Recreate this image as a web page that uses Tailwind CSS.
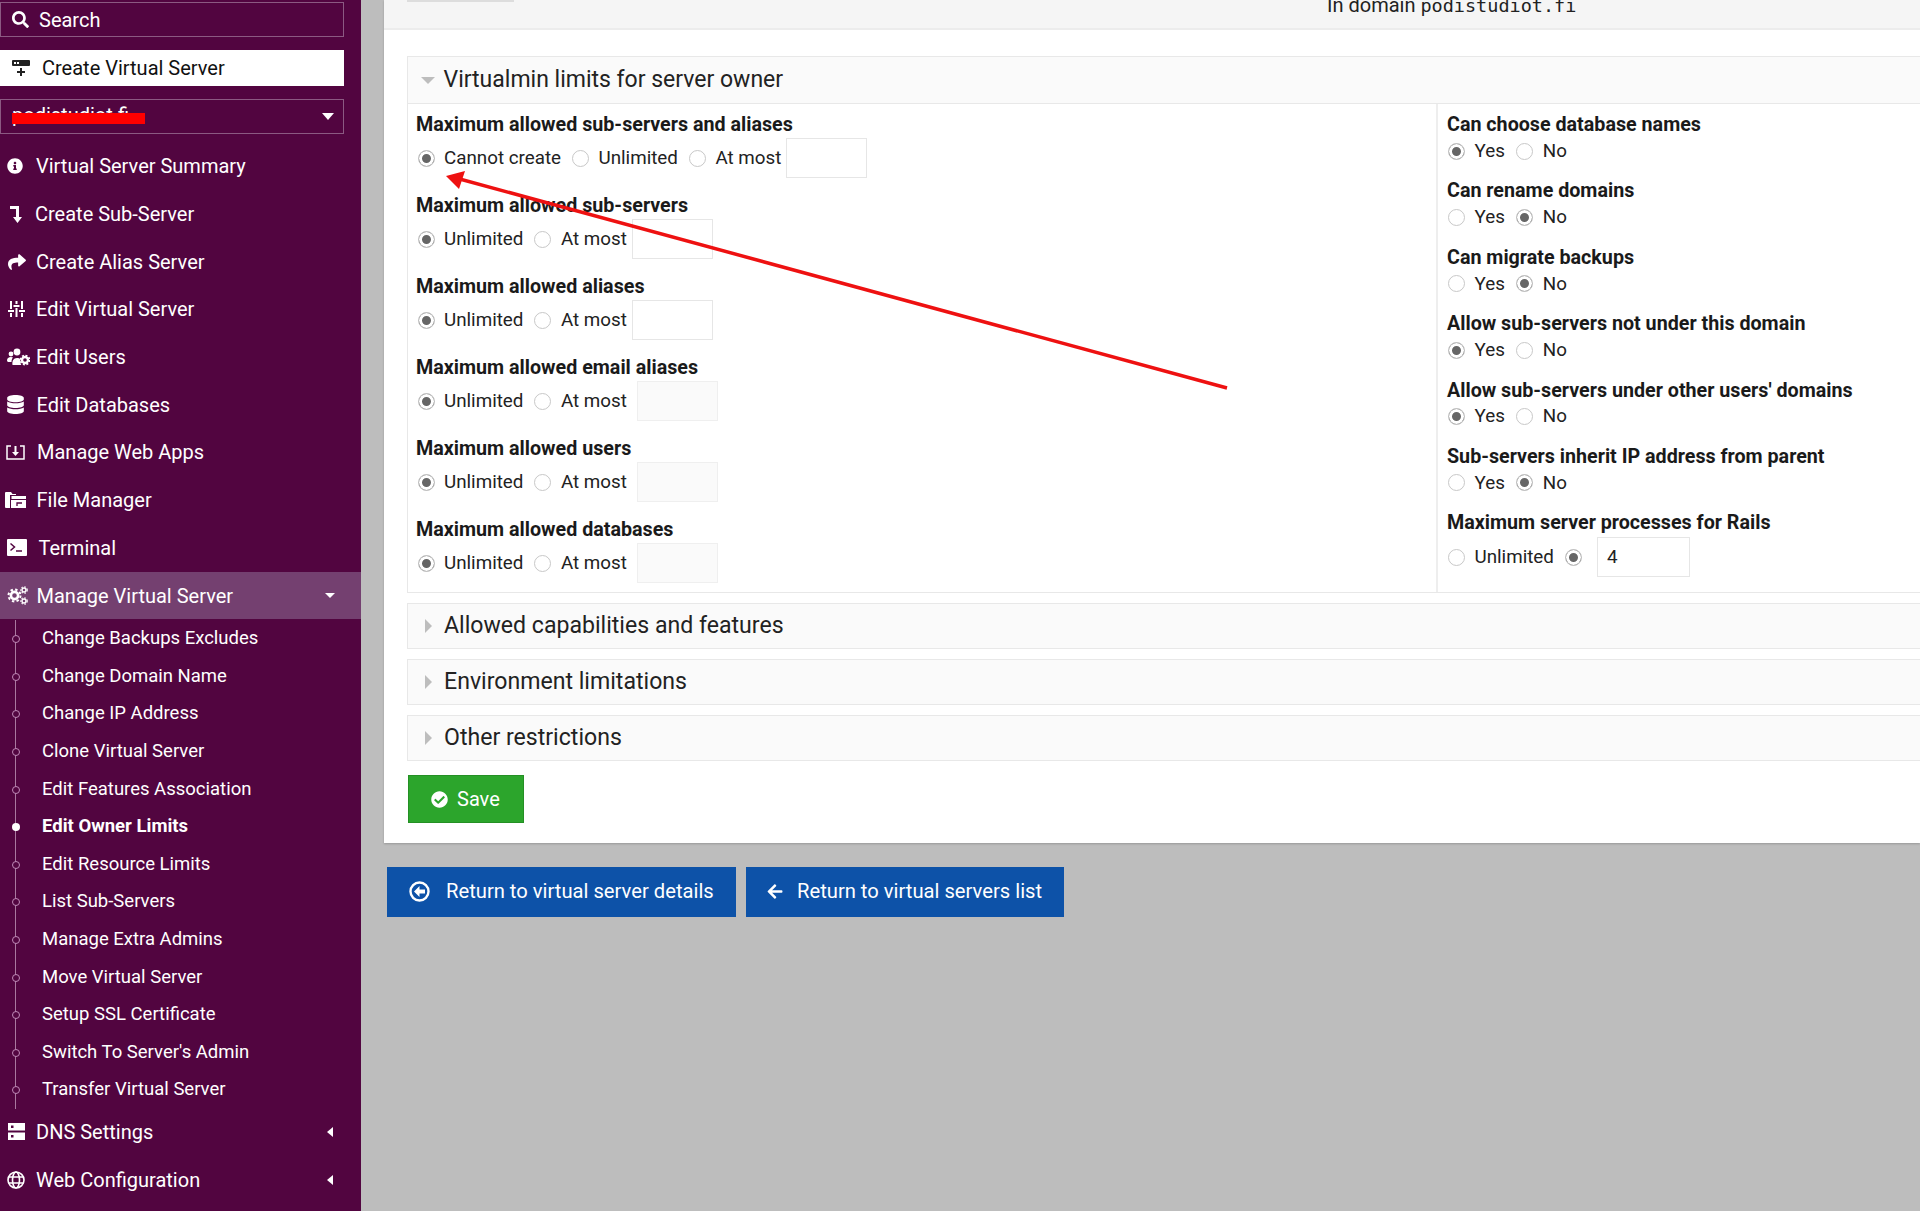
<!DOCTYPE html>
<html lang="en">
<head>
<meta charset="UTF-8">
<title>Edit Owner Limits</title>
<script src="https://cdn.jsdelivr.net/npm/@tailwindcss/browser@4"></script>
</head>
<body class="font-['Roboto',sans-serif] bg-[#bdbdbd]">
<div class="relative flex w-[1920px] h-[1211px] overflow-hidden">

  <!-- Sidebar -->
  <aside class="w-[361px] shrink-0 bg-[#520540] text-white pt-[2px]">
    <div class="w-[344px] h-[35px] border border-[#8b5a82] flex items-center pl-[11px] text-[20px]">
      <svg class="w-[17px] h-[17px] mr-[10px] fill-white" viewBox="0 0 512 512"><path d="M505 442.7L405.3 343c-4.5-4.5-10.6-7-17-7H372c27.6-35.3 44-79.7 44-128C416 93.1 322.9 0 208 0S0 93.1 0 208s93.1 208 208 208c48.3 0 92.7-16.4 128-44v16.3c0 6.4 2.5 12.5 7 17l99.7 99.7c9.4 9.4 24.6 9.4 33.9 0l28.3-28.3c9.4-9.4 9.4-24.6.1-34zM208 336c-70.7 0-128-57.2-128-128 0-70.7 57.2-128 128-128 70.7 0 128 57.2 128 128 0 70.7-57.2 128-128 128z"/></svg>
      Search
    </div>
    <div class="mt-[13px] w-[344px] h-[36px] bg-white text-[#111] flex items-center pl-[12px] text-[20px]">
      <svg class="w-[18px] h-[18px] mr-[12px]" viewBox="0 0 18 18"><rect x="0" y="1" width="18" height="6" rx="1" fill="#222"/><rect x="2" y="3" width="2" height="2" fill="#fff"/><rect x="5" y="3" width="2" height="2" fill="#fff"/><path d="M8 9h2v3h3v2h-3v3H8v-3H5v-2h3z" fill="#222"/></svg>
      Create Virtual Server
    </div>
    <div class="mt-[13px] w-[344px] h-[35px] border border-[#8b5a82] flex items-center justify-between pl-[11px] pr-[9px] text-[20px]">
      <span class="-translate-y-[2px]">podistudiot.fi</span>
      <span class="w-0 h-0 border-x-[6px] border-x-transparent border-t-[7px] border-t-white"></span>
    </div>

    <nav class="mt-[8.5px]" id="menu-top">
      <a class="h-[47.7px] flex items-center text-[20px]"><svg class="w-[16px] h-[16px] ml-[7px] mr-[13px] fill-white" viewBox="0 0 512 512"><path d="M256 8C119.043 8 8 119.083 8 256c0 136.997 111.043 248 248 248s248-111.003 248-248C504 119.083 392.957 8 256 8zm0 110c23.196 0 42 18.804 42 42s-18.804 42-42 42-42-18.804-42-42 18.804-42 42-42zm56 254c0 6.627-5.373 12-12 12h-88c-6.627 0-12-5.373-12-12v-24c0-6.627 5.373-12 12-12h12v-64h-12c-6.627 0-12-5.373-12-12v-24c0-6.627 5.373-12 12-12h64c6.627 0 12 5.373 12 12v100h12c6.627 0 12 5.373 12 12v24z"/></svg>Virtual Server Summary</a>
      <a class="h-[47.7px] flex items-center text-[20px]"><svg class="w-[14px] h-[17px] ml-[9px] mr-[12px] fill-white" viewBox="0 0 14 17"><path d="M1 0h9v11h3l-4.5 6L4 11h3V3H1z"/></svg>Create Sub-Server</a>
      <a class="h-[47.7px] flex items-center text-[20px]"><svg class="w-[18px] h-[18px] ml-[8px] mr-[10px] fill-white" viewBox="0 0 512 512"><path d="M503.691 189.836L327.687 37.851C312.281 24.546 288 35.347 288 56.015v80.053C127.371 137.907 0 170.1 0 322.326c0 61.441 39.581 122.309 83.333 154.132 13.653 9.931 33.111-2.533 28.077-18.631C66.066 312.814 132.917 274.316 288 272.085V360c0 20.7 24.3 31.453 39.687 18.164l176.004-152c11.071-9.562 11.086-26.753 0-36.328z"/></svg>Create Alias Server</a>
      <a class="h-[47.7px] flex items-center text-[20px]"><svg class="w-[17px] h-[16px] ml-[8px] mr-[11px] fill-white" viewBox="0 0 17 16"><path d="M2 0h2v8H2zM2 12h2v4H2zM0 9h6v2H0zM7.5 0h2v3h-2zM7.5 7h2v9h-2zM5.5 4h6v2h-6zM13 0h2v8h-2zM13 12h2v4h-2zM11 9h6v2h-6z"/></svg>Edit Virtual Server</a>
      <a class="h-[47.7px] flex items-center text-[20px]"><svg class="w-[24px] h-[18px] ml-[6px] mr-[6px] fill-white" viewBox="0 0 24 18"><circle cx="5" cy="6" r="2.4"/><circle cx="11" cy="4" r="3.4"/><path d="M1 13c0-3 1.5-4 4-4 .8 0 1.4.2 2 .5C6 10.500 5.500 12 5.500 14H2zM6.500 17c-.6-4 1-7 4.500-7 1.500 0 2.500.4 3.500 1.200-.5 2-.2 4 .8 5.800z"/><circle cx="19" cy="12" r="3" fill="none" stroke="#fff" stroke-width="2.400"/><circle cx="19" cy="12" r="4.600" fill="none" stroke="#fff" stroke-width="1.600" stroke-dasharray="2 1.600"/></svg>Edit Users</a>
      <a class="h-[47.7px] flex items-center text-[20px]"><svg class="w-[17px] h-[19px] ml-[7px] mr-[12.500px] fill-white" viewBox="0 0 448 512"><path d="M448 73.143v45.714C448 159.143 347.667 192 224 192S0 159.143 0 118.857V73.143C0 32.857 100.333 0 224 0s224 32.857 224 73.143zM448 176v102.857C448 319.143 347.667 352 224 352S0 319.143 0 278.857V176c48.125 33.143 136.208 48.572 224 48.572S399.874 209.143 448 176zm0 160v102.857C448 479.143 347.667 512 224 512S0 479.143 0 438.857V336c48.125 33.143 136.208 48.572 224 48.572S399.874 369.143 448 336z"/></svg>Edit Databases</a>
      <a class="h-[47.7px] flex items-center text-[20px]"><svg class="w-[19px] h-[15px] ml-[6px] mr-[12px]" viewBox="0 0 19 15"><path d="M5 1H1v13h17V1h-4" fill="none" stroke="#fff" stroke-width="1.500"/><path d="M8.500 1h2v6h2.500l-3.500 4-3.500-4h2.500z" fill="#fff"/></svg>Manage Web Apps</a>
      <a class="h-[47.7px] flex items-center text-[20px]"><svg class="w-[21px] h-[16px] ml-[5px] mr-[10.500px]" viewBox="0 0 21 16"><path d="M0 1a1 1 0 0 1 1-1h5l1.500 2H11v1H5v13H1a1 1 0 0 1-1-1z M6.500 4H21v3H6.500z M6 8h15v8H6z" fill="#fff"/><path d="M12 14v-3h5" fill="none" stroke="#520540" stroke-width="1.300"/></svg>File Manager</a>
      <a class="h-[47.7px] flex items-center text-[20px]"><svg class="w-[20px] h-[17px] ml-[7px] mr-[11.500px]" viewBox="0 0 20 17"><rect width="20" height="17" rx="1" fill="#fff"/><path d="M3.500 4.500L7.500 8l-4 3.500" fill="none" stroke="#520540" stroke-width="1.500"/><path d="M9 12h6" stroke="#520540" stroke-width="1.500"/></svg>Terminal</a>
      <a class="h-[47.7px] flex items-center text-[20px] bg-[#744070] pr-[26px]"><svg class="w-[21px] h-[19px] ml-[7px] mr-[8.500px]" viewBox="0 0 21 19"><circle cx="7.500" cy="9.500" r="3.600" fill="none" stroke="#fff" stroke-width="2.600"/><circle cx="7.500" cy="9.500" r="6" fill="none" stroke="#fff" stroke-width="2" stroke-dasharray="2.400 2.300"/><circle cx="17" cy="4" r="2" fill="none" stroke="#fff" stroke-width="1.400"/><circle cx="17" cy="4" r="3.200" fill="none" stroke="#fff" stroke-width="1.200" stroke-dasharray="1.500 1.500"/><circle cx="17" cy="15" r="2" fill="none" stroke="#fff" stroke-width="1.400"/><circle cx="17" cy="15" r="3.200" fill="none" stroke="#fff" stroke-width="1.200" stroke-dasharray="1.500 1.500"/></svg>Manage Virtual Server<span class="ml-auto w-0 h-0 border-x-[5px] border-x-transparent border-t-[5px] border-t-white"></span></a>
    </nav>

    <div class="relative mt-[1px]" id="sub-menu">
      <div class="absolute left-[15px] top-0 bottom-0 w-px bg-[#a9789f]"></div>
      <ul id="sub-items"></ul>
    </div>

    <nav class="-mt-[1px]">
      <a class="h-[47.8px] flex items-center text-[20px] pr-[28px]"><svg class="w-[17px] h-[17px] ml-[8px] mr-[11px] fill-white" viewBox="0 0 17 17"><path fill-rule="evenodd" d="M0 0h17v7.500H0zM3 2.500v2.500h2.500V2.500zM0 9.500h17V17H0zM3 12v2.500h2.500V12z"/></svg>DNS Settings<span class="ml-auto w-0 h-0 border-y-[5px] border-y-transparent border-r-[6px] border-r-white"></span></a>
      <a class="h-[47.8px] flex items-center text-[20px] pr-[28px]"><svg class="w-[18px] h-[18px] ml-[7px] mr-[11px]" viewBox="0 0 18 18" fill="none" stroke="#fff" stroke-width="1.600"><circle cx="9" cy="9" r="8"/><ellipse cx="9" cy="9" rx="3.500" ry="8"/><path d="M1.500 6h15M1.500 12h15"/></svg>Web Configuration<span class="ml-auto w-0 h-0 border-y-[5px] border-y-transparent border-r-[6px] border-r-white"></span></a>
    </nav>
  </aside>

  <!-- Main -->
  <main class="ml-[23px] flex-1 min-w-0">
    <div class="bg-white h-[843px] shadow-[0_1px_2px_rgba(0,0,0,0.2)]">
      <div class="h-[30px] bg-[#f5f5f5] border-b-2 border-[#ececec] flex overflow-hidden">
        <div class="ml-[23px] flex h-[2px]">
          <span class="w-[54px] border border-[#ddd]"></span><span class="w-[53px] border border-[#ddd]"></span>
        </div>
        <p class="ml-[813px] -mt-[7px] h-[24px] leading-[24px] text-[20px] text-[#222] whitespace-pre">In domain <span class="font-['DejaVu_Sans_Mono',monospace] text-[18.5px]">podistudiot.fi</span></p>
      </div>

      <div class="pl-[23px] pt-[26px]">
        <section class="border border-r-0 border-[#e8e8e8]">
          <header class="h-[47px] bg-[#fafafa] border-b border-[#e8e8e8] flex items-center">
            <span class="ml-[13px] w-0 h-0 border-x-[7px] border-x-transparent border-t-[7px] border-t-[#bdbdbd]"></span>
            <h2 class="ml-[8.500px] text-[23px] text-[#222]">Virtualmin limits for server owner</h2>
          </header>
          <div class="flex h-[488px]">
            <div class="w-[1030px] pl-[8px] pt-[8px] border-r-2 border-[#eee]" id="left-col"></div>
            <div class="pl-[9px] pt-[8px]" id="right-col"></div>
          </div>
        </section>

        <section class="mt-[10px] h-[46px] bg-[#fafafa] border border-r-0 border-[#e8e8e8] flex items-center">
          <span class="ml-[17px] w-0 h-0 border-y-[7px] border-y-transparent border-l-[7px] border-l-[#bdbdbd]"></span>
          <h2 class="ml-[12px] text-[23.1px] text-[#222]">Allowed capabilities and features</h2>
        </section>
        <section class="mt-[10px] h-[46px] bg-[#fafafa] border border-r-0 border-[#e8e8e8] flex items-center">
          <span class="ml-[17px] w-0 h-0 border-y-[7px] border-y-transparent border-l-[7px] border-l-[#bdbdbd]"></span>
          <h2 class="ml-[12px] text-[23.1px] text-[#222]">Environment limitations</h2>
        </section>
        <section class="mt-[10px] h-[46px] bg-[#fafafa] border border-r-0 border-[#e8e8e8] flex items-center">
          <span class="ml-[17px] w-0 h-0 border-y-[7px] border-y-transparent border-l-[7px] border-l-[#bdbdbd]"></span>
          <h2 class="ml-[12px] text-[23.1px] text-[#222]">Other restrictions</h2>
        </section>

        <button class="mt-[14px] ml-[1px] w-[116px] h-[48px] bg-[#2ca52c] border border-[#249024] text-white text-[20px] flex items-center pl-[22px]">
          <svg class="w-[17px] h-[17px] mr-[9px] fill-white" viewBox="0 0 512 512"><path d="M504 256c0 136.967-111.033 248-248 248S8 392.967 8 256 119.033 8 256 8s248 111.033 248 248zM227.314 387.314l184-184c6.248-6.248 6.248-16.379 0-22.627l-22.627-22.627c-6.248-6.249-16.379-6.249-22.628 0L216 308.118l-70.059-70.059c-6.248-6.248-16.379-6.248-22.628 0l-22.627 22.627c-6.248 6.248-6.248 16.379 0 22.627l104 104c6.249 6.249 16.379 6.249 22.628.001z"/></svg>
          Save
        </button>
      </div>
    </div>

    <div class="mt-[24px] ml-[3px] flex gap-[10px]">
      <button class="w-[349px] h-[50px] pb-[1px] bg-[#0d52a8] text-white text-[20.2px] flex items-center pl-[22px]">
        <svg class="w-[21px] h-[21px] mr-[16px]" viewBox="0 0 21 21"><circle cx="10.500" cy="10.500" r="9" fill="none" stroke="#fff" stroke-width="2.400"/><path d="M10.500 5L5 10.500l5.500 5.500v-3.500H16v-4h-5.500z" fill="#fff"/></svg>
        Return to virtual server details
      </button>
      <button class="w-[318px] h-[50px] pb-[1px] bg-[#0d52a8] text-white text-[20.2px] flex items-center pl-[21px]">
        <svg class="w-[16px] h-[17px] mr-[14px] fill-white" viewBox="0 0 448 512"><path d="M257.5 445.1l-22.2 22.2c-9.4 9.4-24.6 9.4-33.9 0L7 273c-9.4-9.4-9.4-24.6 0-33.9L201.4 44.7c9.4-9.4 24.6-9.4 33.9 0l22.2 22.2c9.5 9.5 9.3 25-.4 34.3L136.6 216H424c13.3 0 24 10.7 24 24v32c0 13.3-10.7 24-24 24H136.6l120.5 114.8c9.8 9.3 10 24.8.4 34.3z"/></svg>
        Return to virtual servers list
      </button>
    </div>
  </main>

  <!-- Annotations drawn on top of the screenshot -->
  <div class="absolute left-[12px] top-[113px] w-[133px] h-[11px] bg-[#f00]"></div>
  <svg class="absolute left-0 top-0 w-[1920px] h-[1211px] pointer-events-none" viewBox="0 0 1920 1211">
    <line x1="1227" y1="388" x2="456" y2="178" stroke="#ee1111" stroke-width="3.500"/>
    <polygon points="446,176 465,171 459,189" fill="#ee1111"/>
  </svg>
</div>

<script>
  const subItems = ["Change Backups Excludes", "Change Domain Name", "Change IP Address", "Clone Virtual Server", "Edit Features Association", "Edit Owner Limits", "Edit Resource Limits", "List Sub-Servers", "Manage Extra Admins", "Move Virtual Server", "Setup SSL Certificate", "Switch To Server's Admin", "Transfer Virtual Server"];
  document.getElementById("sub-items").innerHTML = subItems.map((name) => {
    const active = name === "Edit Owner Limits";
    const dot = active ? "bg-white" : "bg-[#520540] border border-[#c08ab8]";
    const text = active ? "font-bold" : "";
    return `<li class="relative h-[37.6px] flex items-center pl-[42px] text-[18.5px] ${text}">
      <span class="absolute left-[11.5px] w-[8px] h-[8px] rounded-full ${dot}"></span>${name}</li>`;
  }).join("");

  let radioId = 0;
  const radio = (checked, label, cls) => {
    radioId++;
    return `<input type="radio" name="r${radioId}" ${checked ? "checked" : ""} class="appearance-none shrink-0 w-[17px] h-[17px] rounded-full border border-[#c8c8c8] bg-white checked:bg-[#666] checked:shadow-[inset_0_0_0_3px_#fff] ${cls}">` +
      (label ? `<span class="ml-[9.500px] text-[18.8px] text-[#222]">${label}</span>` : "");
  };

  // taller line box than the h3 pushes the text down 1px
  const labelCls = "h-[24px] leading-[26px] text-[19.7px] font-bold text-[#1a1a1a] whitespace-nowrap";

  const leftRows = [
    { label: "Maximum allowed sub-servers and aliases", opts: ["Cannot create", "Unlimited", "At most"], shade: false },
    { label: "Maximum allowed sub-servers", opts: ["Unlimited", "At most"], shade: false },
    { label: "Maximum allowed aliases", opts: ["Unlimited", "At most"], shade: false },
    { label: "Maximum allowed email aliases", opts: ["Unlimited", "At most"], shade: true },
    { label: "Maximum allowed users", opts: ["Unlimited", "At most"], shade: true },
    { label: "Maximum allowed databases", opts: ["Unlimited", "At most"], shade: true },
  ];
  document.getElementById("left-col").innerHTML = leftRows.map((row) => {
    const radios = row.opts.map((o, i) => radio(i === 0, o, i === 0 ? "" : "ml-[11px]")).join("");
    const box = row.shade ? "ml-[10px] bg-[#fafafa] border-[#efefef]" : "ml-[5px] bg-white border-[#e6e6e6]";
    return `<div class="h-[81px]">
      <h3 class="${labelCls}">${row.label}</h3>
      <div class="mt-[2px] h-[40px] flex items-center pl-[1.5px]">${radios}<span class="w-[81px] h-[40px] border ${box}"></span></div>
    </div>`;
  }).join("");

  const rightRows = [
    ["Can choose database names", 0], ["Can rename domains", 1], ["Can migrate backups", 1],
    ["Allow sub-servers not under this domain", 0], ["Allow sub-servers under other users' domains", 0],
    ["Sub-servers inherit IP address from parent", 1],
  ];
  document.getElementById("right-col").innerHTML = rightRows.map(([label, picked]) => `
    <div class="h-[66.4px]">
      <h3 class="${labelCls}">${label}</h3>
      <div class="mt-[3px] h-[24px] flex items-center pl-[1px]">${radio(picked === 0, "Yes", "")}${radio(picked === 1, "No", "ml-[11.5px]")}</div>
    </div>`).join("") + `
    <div>
      <h3 class="${labelCls}">Maximum server processes for Rails</h3>
      <div class="mt-[3px] h-[40px] flex items-center pl-[1px]">${radio(false, "Unlimited", "")}${radio(true, "", "ml-[11px]")}
        <span class="ml-[15px] w-[93px] h-[40px] border border-[#e6e6e6] flex items-center pl-[9px] text-[18.8px] text-[#222]">4</span></div>
    </div>`;
</script>
</body>
</html>
